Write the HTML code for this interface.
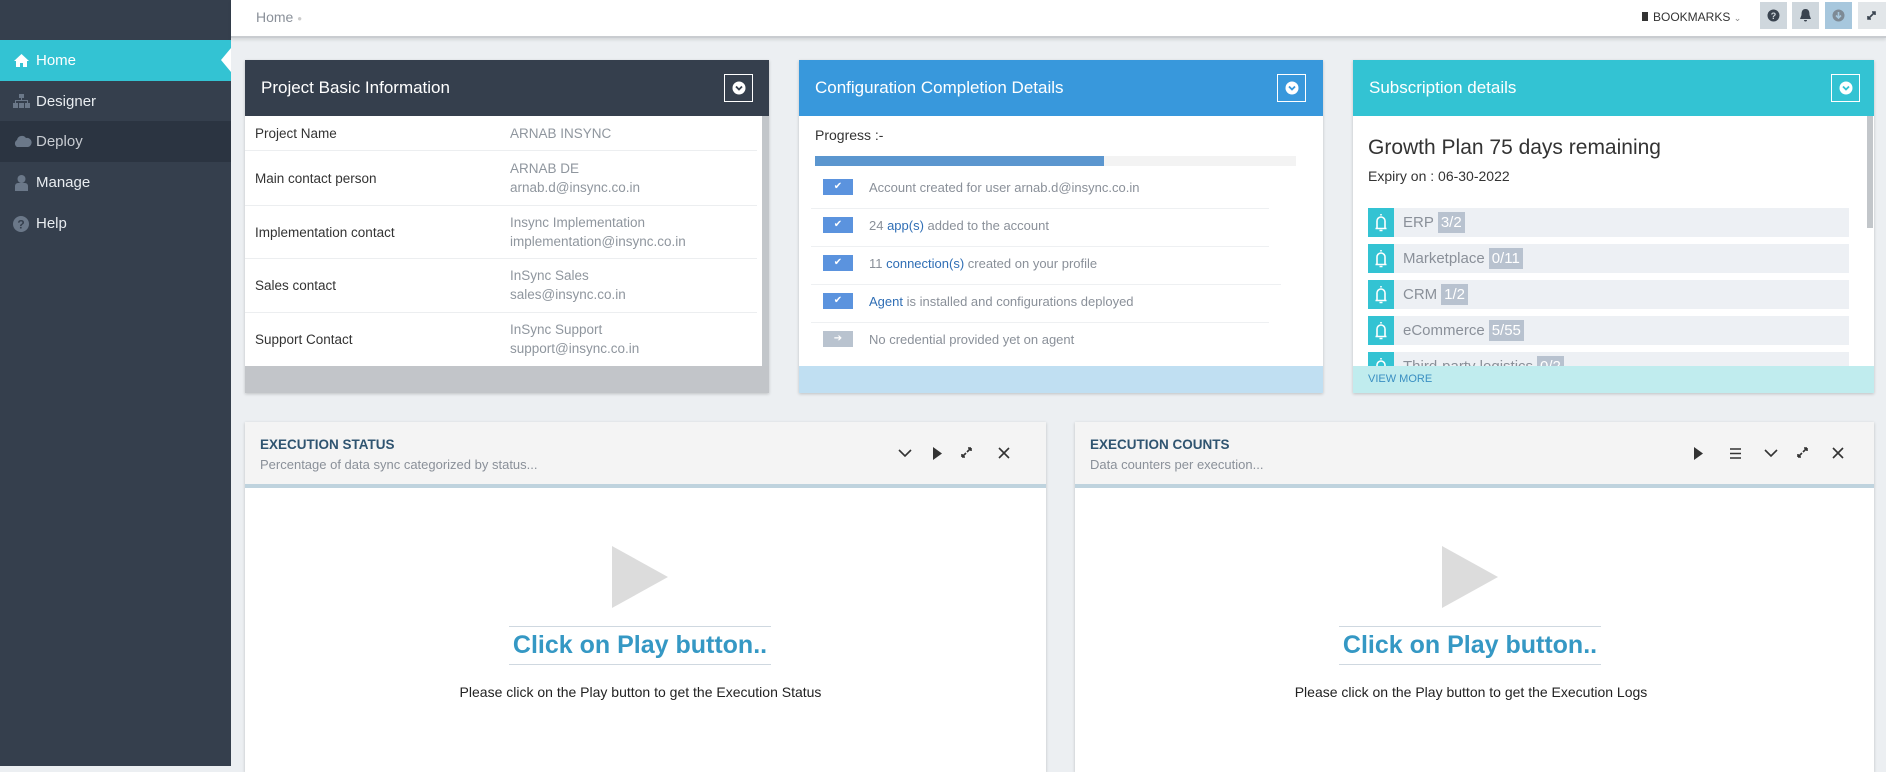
<!DOCTYPE html>
<html><head><meta charset="utf-8"><style>
*{margin:0;padding:0;box-sizing:border-box}
body{width:1886px;height:766px;overflow:hidden;background:#eceff2;font-family:"Liberation Sans",Arial,sans-serif;position:relative}
.a{position:absolute}
.side{left:0;top:0;width:231px;height:766px;background:#353f4d}
.nav{left:0;width:231px;height:41px;color:#e8ecf0;font-size:15px;line-height:41px;padding-left:36px}
.nav svg{position:absolute;left:13px;top:13px}
.top{left:231px;top:0;width:1655px;height:38px;background:#fff;border-bottom:2px solid #c9ccd0;box-shadow:0 2px 3px rgba(0,0,0,.1)}
.tb{top:2px;width:27px;height:27px;background:#cfd7dd}
.panel{background:#fff;box-shadow:0 1px 3px rgba(0,0,0,.2)}
.ph{left:0;top:0;height:56px;width:100%;color:#fff;font-size:17px;line-height:56px;padding-left:16px}
.btn{width:29px;height:28px;border:1px solid #fff;top:14px}
.btn svg{position:absolute;left:7px;top:6px}
.row{left:0;width:512px;border-bottom:1px solid #eceef0;font-size:13.5px;color:#333}
.row .l{position:absolute;left:10px}
.row .v{position:absolute;left:265px;color:#8f969e;line-height:19px}
.ck{left:24px;width:30px;height:16px;background:#5b93de;color:#fff;font-size:10px;text-align:center;line-height:16px}
.ci{left:70px;font-size:13px;color:#8a9099}
.ci b{font-weight:normal;color:#2f6eb5}
.sep{left:12px;width:470px;height:1px;background:#eef0f2}
.li{left:15px;width:481px;height:29px;background:#edf0f4}
.li .ic{position:absolute;left:0;top:0;width:26px;height:29px;background:#33c3d3}
.li span{position:absolute;left:35px;top:6px;font-size:15px;color:#8a9099}
.li em{font-style:normal;background:#b8c2cf;color:#fff;padding:2px 3px;margin-left:4px}
.lp{background:#fff;box-shadow:0 1px 3px rgba(0,0,0,.2)}
.lh{left:0;top:0;width:100%;height:66px;background:#f4f4f4;border-bottom:4px solid #bfd3de}
.lt{left:15px;top:15px;font-size:13.5px;font-weight:bold;color:#2f5470}
.ls{left:15px;top:35px;font-size:13px;color:#8a9099}
.cl{font-size:25px;font-weight:bold;color:#3598c4;text-align:center;border-top:1px solid #cfd8e0;border-bottom:1px solid #cfd8e0;height:39px;line-height:37px}
.ps{font-size:14px;color:#222;text-align:center}
</style></head><body>
<div class="a side">
 <div class="a nav" style="top:40px;background:#33c3d3;color:#fff">
  <svg width="17" height="15" viewBox="0 0 17 15"><path d="M8.5 1 L1 8 H3 V14 H7 V10 H10 V14 H14 V8 H16 Z" fill="#fff"/></svg>Home
  <div class="a" style="right:0;top:8px;width:0;height:0;border-top:12px solid transparent;border-bottom:12px solid transparent;border-right:10px solid #fff"></div>
 </div>
 <div class="a nav" style="top:81px"><svg width="17" height="15" viewBox="0 0 17 15" fill="#6b7889"><rect x="6" y="0" width="5" height="4"/><rect x="8" y="4" width="1" height="3"/><rect x="2" y="6" width="13" height="1"/><rect x="2" y="6" width="1" height="3"/><rect x="14" y="6" width="1" height="3"/><rect x="0" y="9" width="5" height="5"/><rect x="6" y="9" width="5" height="5"/><rect x="12" y="9" width="5" height="5"/></svg>Designer</div>
 <div class="a nav" style="top:121px;background:#2b3441;color:#c8ccd2"><svg width="19" height="14" viewBox="0 0 19 14"><path d="M4 13 A4 4 0 0 1 4 6 A5 5 0 0 1 13 4 A4.5 4.5 0 0 1 15 13 Z" fill="#6b7889"/></svg>Deploy</div>
 <div class="a nav" style="top:162px"><svg width="17" height="16" viewBox="0 0 17 16" fill="#6b7889"><circle cx="8.5" cy="4" r="4"/><path d="M2 16 V11 A3 3 0 0 1 5 8 H12 A3 3 0 0 1 15 11 V16Z"/></svg>Manage</div>
 <div class="a nav" style="top:203px"><svg width="16" height="16" viewBox="0 0 16 16"><circle cx="8" cy="8" r="8" fill="#6b7889"/><text x="8" y="12.5" font-size="12" font-weight="bold" fill="#353f4d" text-anchor="middle" font-family="Liberation Sans">?</text></svg>Help</div>
</div>
<div class="a top">
 <div class="a" style="left:25px;top:9px;font-size:14px;color:#8a9099">Home <span style="color:#ccc;font-size:8px;vertical-align:middle">●</span></div>
 <div class="a" style="left:1411px;top:10px;font-size:12px;color:#333"><span style="display:inline-block;width:6px;height:9px;background:#333;margin-right:5px"></span>BOOKMARKS <span style="color:#888;font-size:9px">⌄</span></div>
 <div class="a tb" style="left:1529px"><svg width="27" height="27"><circle cx="13.5" cy="13.5" r="6" fill="#3a4450"/><text x="13.5" y="17" font-size="9" font-weight="bold" fill="#cfd7dd" text-anchor="middle" font-family="Liberation Sans">?</text></svg></div>
 <div class="a tb" style="left:1561px"><svg width="27" height="27"><path d="M13.5 7 C10 7 9.5 10 9.5 13 L8 17 H19 L17.5 13 C17.5 10 17 7 13.5 7Z M12 18 H15 A1.5 1.5 0 0 1 12 18Z" fill="#3a4450"/></svg></div>
 <div class="a tb" style="left:1594px;background:#a7c7dd"><svg width="27" height="27"><circle cx="13.5" cy="13.5" r="6" fill="#7e8a95"/><path d="M13.5 10 V16 M11 13.5 L13.5 16 L16 13.5" stroke="#a7c7dd" stroke-width="1.6" fill="none"/></svg></div>
 <div class="a tb" style="left:1627px;width:28px;background:#e2e6e9"><svg width="27" height="27"><path d="M10 17 L17 10 M14 10 H17 V13 M10 14 V17 H13" stroke="#3a4450" stroke-width="1.6" fill="none"/></svg></div>
</div>

<!-- panel 1 -->
<div class="a panel" style="left:245px;top:60px;width:524px;height:333px">
 <div class="a ph" style="background:#353f4d">Project Basic Information</div>
 <div class="a btn" style="left:479px"><svg width="14" height="14"><circle cx="7" cy="7" r="6.5" fill="#fff"/><path d="M4 5.5 L7 8.5 L10 5.5" stroke="#353f4d" stroke-width="1.8" fill="none"/></svg></div>
 <div class="a" style="left:517px;top:56px;width:7px;height:250px;background:#c2c6ca"></div>
 <div class="a row" style="top:56px;height:35px"><span class="l" style="top:10px">Project Name</span><span class="v" style="top:8px">ARNAB INSYNC</span></div>
 <div class="a row" style="top:91px;height:55px"><span class="l" style="top:20px">Main contact person</span><span class="v" style="top:8px">ARNAB DE<br>arnab.d@insync.co.in</span></div>
 <div class="a row" style="top:146px;height:53px"><span class="l" style="top:19px">Implementation contact</span><span class="v" style="top:7px">Insync Implementation<br>implementation@insync.co.in</span></div>
 <div class="a row" style="top:199px;height:54px"><span class="l" style="top:19px">Sales contact</span><span class="v" style="top:7px">InSync Sales<br>sales@insync.co.in</span></div>
 <div class="a row" style="top:253px;height:53px;border:none"><span class="l" style="top:19px">Support Contact</span><span class="v" style="top:7px">InSync Support<br>support@insync.co.in</span></div>
 <div class="a" style="left:0;top:306px;width:524px;height:27px;background:#c2c5c9"></div>
</div>

<!-- panel 2 -->
<div class="a panel" style="left:799px;top:60px;width:524px;height:333px">
 <div class="a ph" style="background:#3898dc">Configuration Completion Details</div>
 <div class="a btn" style="left:478px"><svg width="14" height="14"><circle cx="7" cy="7" r="6.5" fill="#fff"/><path d="M4 5.5 L7 8.5 L10 5.5" stroke="#3898dc" stroke-width="1.8" fill="none"/></svg></div>
 <div class="a" style="left:16px;top:67px;font-size:14px;color:#333">Progress :-</div>
 <div class="a" style="left:16px;top:96px;width:481px;height:10px;background:#f3f3f3"><div style="width:289px;height:10px;background:#5b96cf"></div></div>
 <div class="a ck" style="top:119px">✔</div><div class="a ci" style="top:120px">Account created for user arnab.d@insync.co.in</div>
 <div class="a sep" style="top:148px;width:458px"></div>
 <div class="a ck" style="top:157px">✔</div><div class="a ci" style="top:158px">24 <b>app(s)</b> added to the account</div>
 <div class="a sep" style="top:186px;width:458px"></div>
 <div class="a ck" style="top:195px">✔</div><div class="a ci" style="top:196px">11 <b>connection(s)</b> created on your profile</div>
 <div class="a sep" style="top:224px;width:470px"></div>
 <div class="a ck" style="top:233px">✔</div><div class="a ci" style="top:234px"><b>Agent</b> is installed and configurations deployed</div>
 <div class="a sep" style="top:262px;width:458px"></div>
 <div class="a ck" style="top:271px;background:#b9c3cf">➔</div><div class="a ci" style="top:272px">No credential provided yet on agent</div>
 <div class="a" style="left:0;top:306px;width:524px;height:27px;background:#c0dff2"></div>
</div>

<!-- panel 3 -->
<div class="a panel" style="left:1353px;top:60px;width:521px;height:333px;overflow:hidden">
 <div class="a ph" style="background:#33c3d3">Subscription details</div>
 <div class="a btn" style="left:478px"><svg width="14" height="14"><circle cx="7" cy="7" r="6.5" fill="#fff"/><path d="M4 5.5 L7 8.5 L10 5.5" stroke="#33c3d3" stroke-width="1.8" fill="none"/></svg></div>
 <div class="a" style="left:514px;top:56px;width:6px;height:112px;background:#c2c6ca"></div>
 <div class="a" style="left:15px;top:76px;font-size:21px;color:#333">Growth Plan 75 days remaining</div>
 <div class="a" style="left:15px;top:108px;font-size:14px;color:#333">Expiry on : 06-30-2022</div>
 <div class="a li" style="top:148px"><div class="ic"></div><span>ERP<em>3/2</em></span></div>
 <div class="a li" style="top:184px"><div class="ic"></div><span>Marketplace<em>0/11</em></span></div>
 <div class="a li" style="top:220px"><div class="ic"></div><span>CRM<em>1/2</em></span></div>
 <div class="a li" style="top:256px"><div class="ic"></div><span>eCommerce<em>5/55</em></span></div>
 <div class="a li" style="top:292px"><div class="ic"></div><span>Third-party logistics<em>0/2</em></span></div>
 <svg class="a" style="left:15px;top:148px" width="26" height="158"><g fill="none" stroke="#fff" stroke-width="1.6"><path id="b" d="M9 20 V13 A4 4 0 0 1 17 13 V20 M7.5 20.5 H18.5 M13 6 V7.5 M11.5 22.5 H14.5"/><use href="#b" y="36"/><use href="#b" y="72"/><use href="#b" y="108"/><use href="#b" y="144"/></g></svg>
 <div class="a" style="left:0;top:306px;width:521px;height:27px;background:#c0ecee;color:#3a8fc2;font-size:11px;line-height:27px;padding-left:15px">VIEW MORE</div>
</div>

<!-- lower left -->
<div class="a lp" style="left:245px;top:422px;width:801px;height:350px">
 <div class="a lh"></div>
 <div class="a lt">EXECUTION STATUS</div>
 <div class="a ls">Percentage of data sync categorized by status...</div>
 <svg class="a" style="left:650px;top:22px" width="140" height="20"><g stroke="#333" stroke-width="1.6" fill="none"><path d="M4 6 L10 12 L16 6"/><path d="M76 4 L72 8 M76 4 H73 M76 4 V7 M67 13 L71 9 M67 13 H70 M67 13 V10"/><path d="M104 4 L114 14 M114 4 L104 14"/></g><path d="M38 3 L47 9.5 L38 16 Z" fill="#333"/></svg>
 <svg class="a" style="left:367px;top:124px" width="58" height="62"><path d="M0 0 L56 31 L0 62Z" fill="#dcdcdc"/></svg>
 <div class="a cl" style="left:264px;top:204px;width:262px">Click on Play button..</div>
 <div class="a ps" style="left:0;top:262px;width:791px">Please click on the Play button to get the Execution Status</div>
</div>

<!-- lower right -->
<div class="a lp" style="left:1075px;top:422px;width:799px;height:350px">
 <div class="a lh"></div>
 <div class="a lt">EXECUTION COUNTS</div>
 <div class="a ls">Data counters per execution...</div>
 <svg class="a" style="left:615px;top:22px" width="170" height="20"><path d="M4 3 L13 9.5 L4 16 Z" fill="#333"/><g stroke="#333" stroke-width="1.6" fill="none"><path d="M40 5 H51 M40 9.5 H51 M40 14 H51"/><path d="M75 6 L81 12 L87 6"/><path d="M117 4 L113 8 M117 4 H114 M117 4 V7 M108 13 L112 9 M108 13 H111 M108 13 V10"/><path d="M143 4 L153 14 M153 4 L143 14"/></g></svg>
 <svg class="a" style="left:367px;top:124px" width="58" height="62"><path d="M0 0 L56 31 L0 62Z" fill="#dcdcdc"/></svg>
 <div class="a cl" style="left:264px;top:204px;width:262px">Click on Play button..</div>
 <div class="a ps" style="left:0;top:262px;width:792px">Please click on the Play button to get the Execution Logs</div>
</div>
</body></html>
